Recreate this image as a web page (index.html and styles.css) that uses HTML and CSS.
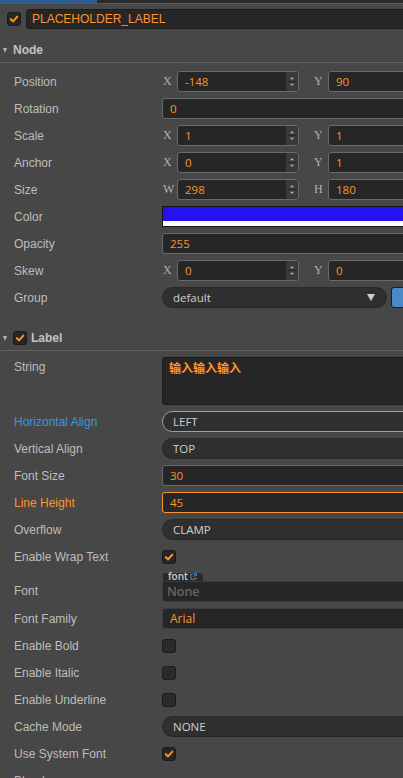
FILE: index.html
```html
<!DOCTYPE html>
<html>
<head>
<meta charset="utf-8">
<link rel="stylesheet" href="styles.css">
</head>
<body>
<div class="panel">
  <div class="topbar"><div class="tab"></div></div>
  <div class="name-row">
    <span class="check"><svg viewBox="0 0 14 14"><path d="M3.3 7.2 L6 9.8 L10.8 4.3"/></svg></span>
    <div class="name-input">PLACEHOLDER_LABEL</div>
  </div>

  <div class="sec-head"><span class="caret"></span><span class="sec-title">Node</span></div>
  <div class="sec-body node-body">
    <div class="row"><div class="lbl">Position</div><div class="val vec">
      <div class="vi"><span class="ax">X</span><div class="inp num"><span class="t">-148</span><span class="spin"><svg viewBox="0 0 12 21"><path class="ar" d="M3.5 8 L6 5.5 L8.5 8 Z M3.5 13 L6 15.5 L8.5 13 Z"/><path class="dv" d="M0 10.5 H12"/></svg></span></div></div>
      <div class="vi"><span class="ax">Y</span><div class="inp num"><span class="t">90</span></div></div>
    </div></div>
    <div class="row"><div class="lbl">Rotation</div><div class="val"><div class="inp">0</div></div></div>
    <div class="row"><div class="lbl">Scale</div><div class="val vec">
      <div class="vi"><span class="ax">X</span><div class="inp num"><span class="t">1</span><span class="spin"><svg viewBox="0 0 12 21"><path class="ar" d="M3.5 8 L6 5.5 L8.5 8 Z M3.5 13 L6 15.5 L8.5 13 Z"/><path class="dv" d="M0 10.5 H12"/></svg></span></div></div>
      <div class="vi"><span class="ax">Y</span><div class="inp num"><span class="t">1</span></div></div>
    </div></div>
    <div class="row"><div class="lbl">Anchor</div><div class="val vec">
      <div class="vi"><span class="ax">X</span><div class="inp num"><span class="t">0</span><span class="spin"><svg viewBox="0 0 12 21"><path class="ar" d="M3.5 8 L6 5.5 L8.5 8 Z M3.5 13 L6 15.5 L8.5 13 Z"/><path class="dv" d="M0 10.5 H12"/></svg></span></div></div>
      <div class="vi"><span class="ax">Y</span><div class="inp num"><span class="t">1</span></div></div>
    </div></div>
    <div class="row"><div class="lbl">Size</div><div class="val vec">
      <div class="vi"><span class="ax">W</span><div class="inp num"><span class="t">298</span><span class="spin"><svg viewBox="0 0 12 21"><path class="ar" d="M3.5 8 L6 5.5 L8.5 8 Z M3.5 13 L6 15.5 L8.5 13 Z"/><path class="dv" d="M0 10.5 H12"/></svg></span></div></div>
      <div class="vi"><span class="ax">H</span><div class="inp num"><span class="t">180</span></div></div>
    </div></div>
    <div class="row"><div class="lbl">Color</div><div class="val"><div class="color"></div></div></div>
    <div class="row"><div class="lbl">Opacity</div><div class="val"><div class="inp">255</div></div></div>
    <div class="row"><div class="lbl">Skew</div><div class="val vec">
      <div class="vi"><span class="ax">X</span><div class="inp num"><span class="t">0</span><span class="spin"><svg viewBox="0 0 12 21"><path class="ar" d="M3.5 8 L6 5.5 L8.5 8 Z M3.5 13 L6 15.5 L8.5 13 Z"/><path class="dv" d="M0 10.5 H12"/></svg></span></div></div>
      <div class="vi"><span class="ax">Y</span><div class="inp num"><span class="t">0</span></div></div>
    </div></div>
    <div class="row"><div class="lbl">Group</div><div class="val group">
      <div class="sel grow"><span>default</span><span class="tri"></span></div>
      <div class="btn-blue"></div>
    </div></div>
  </div>

  <div class="sec-head"><span class="caret"></span><span class="check"><svg viewBox="0 0 14 14"><path d="M3.3 7.2 L6 9.8 L10.8 4.3"/></svg></span><span class="sec-title">Label</span></div>
  <div class="sec-body label-body">
    <div class="row tall"><div class="lbl">String</div><div class="val"><div class="textarea">输入输入输入</div></div></div>
    <div class="row"><div class="lbl blue">Horizontal Align</div><div class="val"><div class="sel hover"><span>LEFT</span></div></div></div>
    <div class="row"><div class="lbl">Vertical Align</div><div class="val"><div class="sel"><span>TOP</span></div></div></div>
    <div class="row"><div class="lbl">Font Size</div><div class="val"><div class="inp">30</div></div></div>
    <div class="row"><div class="lbl orange">Line Height</div><div class="val"><div class="inp focus">45</div></div></div>
    <div class="row"><div class="lbl">Overflow</div><div class="val"><div class="sel"><span>CLAMP</span></div></div></div>
    <div class="row"><div class="lbl">Enable Wrap Text</div><div class="val"><span class="check"><svg viewBox="0 0 14 14"><path d="M3.3 7.2 L6 9.8 L10.8 4.3"/></svg></span></div></div>
    <div class="row asset-row"><div class="lbl">Font</div><div class="val asset">
      <div class="asset-tab"><span>font</span><svg class="link" viewBox="0 0 8 8"><path d="M3.5 1.5 H1 V7 H6.5 V4.5" /><path d="M4.5 0.8 H7.2 V3.5 M7.2 0.8 L3.8 4.2"/></svg></div>
      <div class="asset-field">None</div>
    </div></div>
    <div class="row"><div class="lbl">Font Family</div><div class="val"><div class="inp plain">Arial</div></div></div>
    <div class="row"><div class="lbl">Enable Bold</div><div class="val"><span class="check off"></span></div></div>
    <div class="row"><div class="lbl">Enable Italic</div><div class="val"><span class="check off"></span></div></div>
    <div class="row"><div class="lbl">Enable Underline</div><div class="val"><span class="check off"></span></div></div>
    <div class="row"><div class="lbl">Cache Mode</div><div class="val"><div class="sel"><span>NONE</span></div></div></div>
    <div class="row"><div class="lbl">Use System Font</div><div class="val"><span class="check"><svg viewBox="0 0 14 14"><path d="M3.3 7.2 L6 9.8 L10.8 4.3"/></svg></span></div></div>
    <div class="row"><div class="lbl">Blend</div><div class="val"></div></div>
  </div>
</div>
</body>
</html>
```
FILE: styles.css
```css
html, body {
  margin: 0;
  padding: 0;
  overflow: hidden;
  background: #474747;
}
.panel {
  width: 460px;
  background: #474747;
  font-family: "Liberation Sans", Arial, sans-serif;
  font-size: 12px;
  color: #bdbdbd;
}
.topbar {
  height: 3px;
  background: #2c2c2c;
  border-bottom: 1px solid #5a5a5a;
}
.tab {
  width: 97px;
  height: 3px;
  background: #2f5b93;
}
.name-row {
  display: flex;
  align-items: center;
  padding: 5px 0 9px 7px;
  gap: 5px;
}
.name-input {
  flex: 1;
  height: 20px;
  box-sizing: border-box;
  background: #262626;
  border: 1px solid #1c1c1c;
  border-radius: 3px 0 0 3px;
  color: #fd942b;
  line-height: 18px;
  padding-left: 5px;
}
.check {
  display: inline-block;
  width: 14px;
  height: 14px;
  box-sizing: border-box;
  background: #262626;
  border: 1px solid #1b1b1b;
  border-radius: 3px;
  flex: none;
}
.check svg {
  display: block;
  width: 12px;
  height: 12px;
}
.check path {
  fill: none;
  stroke: #f7931e;
  stroke-width: 2.4;
  stroke-linecap: round;
  stroke-linejoin: round;
}
.check.off {
  background: #2b2b2b;
}
.sec-head {
  height: 24px;
  display: flex;
  align-items: center;
  border-bottom: 1px solid #626262;
  padding-left: 3px;
}
.caret {
  width: 0;
  height: 0;
  border-left: 2.5px solid transparent;
  border-right: 2.5px solid transparent;
  border-top: 5px solid #b5b5b5;
  margin-right: 6px;
}
.sec-head .check {
  margin-right: 4px;
}
.sec-title {
  font-weight: bold;
  color: #c2c2c2;
}
.node-body {
  padding: 5px 0 15px;
}
.label-body {
  padding: 3px 0 0;
}
.row {
  display: flex;
  align-items: center;
  height: 27px;
  padding-right: 10px;
}
.row.tall {
  height: 54px;
  align-items: flex-start;
  padding-top: 3px;
  box-sizing: border-box;
}
.row.tall .lbl {
  line-height: 21px;
}
.row.asset-row {
  height: 35px;
  align-items: flex-end;
  padding-bottom: 3px;
  box-sizing: border-box;
}
.row.asset-row .lbl {
  line-height: 21px;
}
.lbl {
  width: 148px;
  padding-left: 14px;
  flex: none;
  white-space: nowrap;
}
.lbl.blue { color: #3795e8; }
.lbl.orange { color: #fd942b; }
.val {
  flex: 1;
  display: flex;
  align-items: center;
  min-width: 0;
}
.vec {
  gap: 14px;
}
.vi {
  flex: 1;
  display: flex;
  align-items: center;
}
.ax {
  width: 15px;
  flex: none;
  font-family: "Liberation Serif", "DejaVu Serif", serif;
  font-size: 12px;
  color: #b0b0b0;
  padding-left: 1px;
  box-sizing: border-box;
}
.inp {
  flex: 1;
  height: 21px;
  box-sizing: border-box;
  background: #262626;
  border: 1px solid #6a6a6a;
  border-radius: 3px;
  color: #fd942b;
  font-family: "Open Sans", "Noto Sans", sans-serif;
  font-size: 11.5px;
  line-height: 19px;
  padding-left: 7px;
}
.inp.num {
  display: flex;
  padding-right: 0;
}
.inp.num .t {
  flex: 1;
}
.inp.focus {
  border-color: #fd942b;
}
.inp.plain {
  border-color: #3c3c3c;
  font-size: 12px;
}
.spin {
  width: 12px;
  height: 19px;
  background: #3a3a3a;
  border-radius: 0 2px 2px 0;
  flex: none;
}
.spin svg {
  display: block;
  width: 12px;
  height: 19px;
}
.spin .ar { fill: #a8a8a8; }
.spin .dv { stroke: #222; stroke-width: 1; }
.color {
  flex: 1;
  height: 21px;
  box-sizing: border-box;
  border: 1px solid #141414;
  background: linear-gradient(to bottom, #2612f0 0, #2612f0 14px, #ffffff 14px);
}
.sel {
  flex: 1;
  height: 21px;
  box-sizing: border-box;
  background: #2f2f2f;
  border: 1px solid #2a2a2a;
  border-bottom-color: #262626;
  border-radius: 11px;
  color: #cfcfcf;
  font-family: "Open Sans", "Noto Sans", sans-serif;
  font-size: 11.5px;
  line-height: 19px;
  padding-left: 10px;
  display: flex;
  align-items: center;
}
.sel.hover {
  border-color: #a0a0a0;
}
.group {
  gap: 4px;
}
.sel.grow span:first-child {
  flex: 1;
}
.tri {
  width: 0;
  height: 0;
  border-left: 4px solid transparent;
  border-right: 4px solid transparent;
  border-top: 7px solid #cfcfcf;
  margin-right: 11px;
}
.btn-blue {
  width: 59px;
  height: 21px;
  box-sizing: border-box;
  background: #4a88c8;
  border: 1px solid #1e1e1e;
  border-radius: 3px;
}
.textarea {
  flex: 1;
  height: 48px;
  box-sizing: border-box;
  background: #262626;
  border: 1px solid #1a1a1a;
  border-radius: 3px;
  color: #fd942b;
  font-family: "Noto Sans CJK SC", sans-serif;
  font-size: 12px;
  font-weight: bold;
  line-height: 14px;
  padding: 3px 6px;
}
.asset {
  flex-direction: column;
  align-items: flex-start;
}
.asset-tab {
  height: 9px;
  width: 42px;
  box-sizing: border-box;
  background: #2a2a2a;
  border: 1px solid #4a4a4a;
  border-bottom: none;
  border-radius: 3px 3px 0 0;
  display: flex;
  align-items: center;
  padding-left: 5px;
  gap: 2px;
  overflow: visible;
}
.asset-tab span {
  font-family: "Open Sans", sans-serif;
  font-size: 10px;
  font-weight: 600;
  color: #cfcfcf;
  line-height: 9px;
  margin-top: -1px;
}
.link {
  width: 7px;
  height: 7px;
  margin-top: -2px;
}
.link path {
  fill: none;
  stroke: #3f95e0;
  stroke-width: 1.1;
}
.asset-field {
  align-self: stretch;
  height: 21px;
  box-sizing: border-box;
  background: #262626;
  border: 1px solid #3a3a3a;
  border-radius: 0 3px 3px 3px;
  color: #676767;
  font-family: "Open Sans", sans-serif;
  font-weight: 600;
  font-size: 12.5px;
  line-height: 19px;
  padding-left: 4px;
}
```
